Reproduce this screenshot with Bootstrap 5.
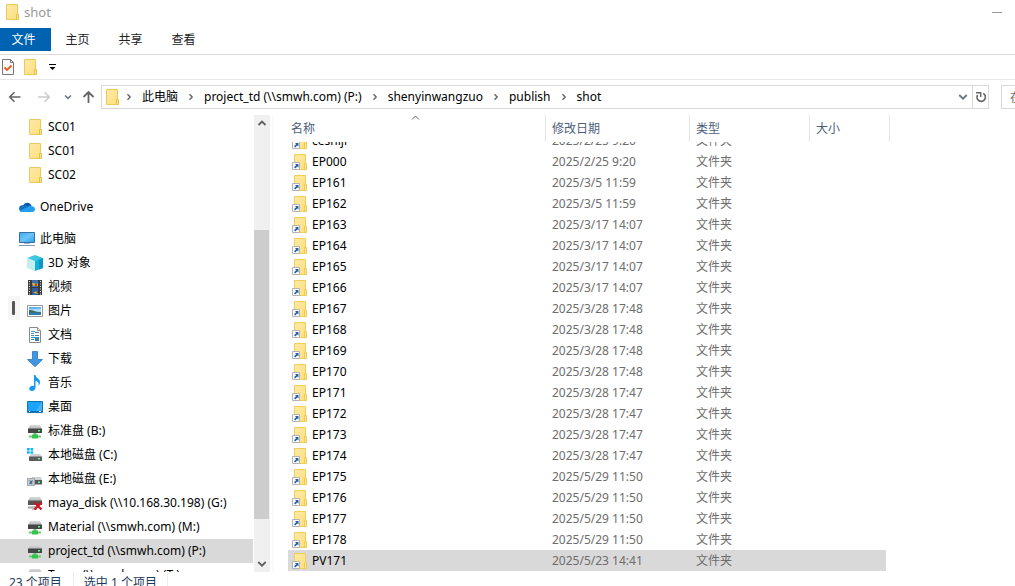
<!DOCTYPE html>
<html lang="zh-CN">
<head>
<meta charset="utf-8">
<meta name="viewport" content="width=device-width, initial-scale=1">
<title>shot</title>
<link href="https://cdn.jsdelivr.net/npm/bootstrap@5.3.0/dist/css/bootstrap.min.css" rel="stylesheet">
<style>
  body { font: 12px/20px "Noto Sans", "Noto Sans CJK SC", sans-serif; color: #000; background: #fff; }
  button, input { font: inherit; color: inherit; }
  svg { display: block; flex: none; }
  .ico { width: 16px; height: 16px; }
  .plain { border: 0; background: none; padding: 0; }

  .title-bar { height: 28px; padding: 0 13px 4px 4px; font-size: 13px; color: #999; }
  .ribbon { height: 27px; border-bottom: 1px solid #dadbdc; }
  .ribbon .nav-link { height: 23px; padding: 0; line-height: 24px; width: 53px; text-align: center; color: #222; }
  .ribbon .nav-link.active { width: 51px; padding-right: 4px; background: #0063b1; color: #fff; }
  .quick { height: 25px; gap: 6px; border-bottom: 1px solid #e6e6e6; }

  .address-row { height: 35px; padding: 5px 0 6px; }
  .up { margin: 0 6px; }
  .address { border: 1px solid #d9d9d9; min-width: 0; padding-left: 2px; }
  .address .breadcrumb-item { padding: 0; }
  .address .breadcrumb-item + .breadcrumb-item::before { display: none; }
  .address .breadcrumb-item svg { margin: 0 9px; }
  .address .breadcrumb-item:first-child svg { margin-left: 5px; }
  .address a { color: #000; text-decoration: none; white-space: nowrap; line-height: 22px; }
  .address .refresh { width: 16px; border-left: 1px solid #d9d9d9; }
  .search { width: 14px; overflow: hidden; margin-left: 12px; }
  .search input { width: 240px; height: 24px; border: 1px solid #d9d9d9; padding: 0 8px; border-radius: 0; outline: 0; }
  .search input::placeholder { color: #6d6d6d; opacity: 1; }

  .tree { width: 254px; overflow: hidden; }
  .tree ul { margin: 0; padding: 0; list-style: none; }
  .tree .group { margin-bottom: 8px; }
  .tree a { display: flex; align-items: center; gap: 5px; height: 24px; padding-left: 19px; margin-right: 1px; color: #000; text-decoration: none; white-space: nowrap; }
  .tree a .lbl { line-height: 24px; }
  .tree ul ul a { padding-left: 27px; }
  .tree a.current { background: #d9d9d9; }
  .handle { left: 8px; top: 181px; width: 12px; height: 24px; background: #f6f6f6; }
  .handle::after { content: ""; position: absolute; left: 4px; top: 5px; width: 3px; height: 14px; background: #555; border-radius: 1px; }

  .scroller { width: 16px; background: #f0f0f0; }
  .scroller .track { flex: 99 0 0; }
  .scroller .thumb { flex: 289 0 0; margin-right: 1px; background: #cdcdcd; }
  .scroller .rest { flex: 37 0 0; }
  .scroller button { height: 16px; }
  .divide { width: 3px; border-right: 1px solid #f7f7f7; }

  .files { overflow: hidden; padding-left: 15px; }
  .files table { table-layout: fixed; width: 602px; border-collapse: separate; border-spacing: 0; }
  .files th { position: sticky; top: 0; height: 27px; padding: 0 0 0 6px; background: #fff; border-right: 1px solid #e5e5e5; color: #4c607a; font-weight: 400; line-height: 27px; }
  .files th:first-child { padding-left: 3px; }
  .files th svg { position: absolute; left: 123px; top: 0; }
  .files td { height: 21px; padding: 0 0 0 6px; color: #6d6d6d; line-height: 21px; white-space: nowrap; }
  .files td:first-child { padding-left: 4px; color: #000; }
  .files td:last-child { border-right: 4px solid transparent; background-clip: padding-box; }
  .files tr.picked td { background-color: #d9d9d9; }
  .files .end { height: 1px; }

  .status { height: 14px; overflow: hidden; line-height: 22px; color: #1e395b; padding-left: 9px; }
  .status span + span { margin-left: 11px; padding-left: 10px; border-left: 1px solid #eee; }
  .status span:last-child { padding-right: 10px; border-right: 1px solid #eee; }
</style>
</head>
<body>
<svg width="0" height="0" class="position-absolute" aria-hidden="true">
  <defs>
    <linearGradient id="gFold" x1="0" y1="0" x2="1" y2="1"><stop offset="0" stop-color="#ffeaa6"/><stop offset="1" stop-color="#fddf80"/></linearGradient>
    <linearGradient id="gScreen" x1="0" y1="0" x2="1" y2="1"><stop offset="0" stop-color="#3fa9f5"/><stop offset=".5" stop-color="#6cc4fb"/><stop offset="1" stop-color="#2b9cf0"/></linearGradient>
    <linearGradient id="gDrive" x1="0" y1="0" x2="0" y2="1"><stop offset="0" stop-color="#d9d9dc"/><stop offset="1" stop-color="#b8b9bc"/></linearGradient>
  </defs>
  <symbol id="folder" viewBox="0 0 16 16"><path d="M2.500.5h11v15h-11z" fill="url(#gFold)" stroke="#ebcb5f"/><path d="M12.500 10.500h2v5h-2z" fill="#ffe794" stroke="#e6bf45"/></symbol>
  <symbol id="link-folder" viewBox="0 0 16 16"><path d="M2.500.5h11v15h-11z" fill="url(#gFold)" stroke="#f0cf55"/><path d="M12.500 9.500h2v6h-2z" fill="#ffe794" stroke="#efcb50"/><path d="M.5 8.500h7v7h-7z" fill="#fff" stroke="#b0b4b8"/><path d="M3 10h3.500v3.500L5.300 12.400 3.200 14.500 2 13.300 4.100 11.200z" fill="#2a62a8"/></symbol>
  <symbol id="cloud" viewBox="0 0 16 16"><path d="M4 6.500A4.500 4.500 0 0 1 12.500 7L8 10.500z" fill="#0a5ba8"/><path d="M3.500 6.200C5.500 5.500 7 6.300 9 7.600L4 13H3.500A3.400 3.400 0 0 1 3.500 6.200z" fill="#1272c8"/><path d="M9 7.700c1.500-1.300 3.300-1 4-.5 2.200.3 3 1.600 3 3 0 1.800-1.200 2.800-2.700 2.800H3.500C2.500 13 1.500 12.600 1 11.800z" fill="#239ff0"/></symbol>
  <symbol id="pc" viewBox="0 0 16 16"><path d="M.5 1.500h15v10H.5z" fill="url(#gScreen)" stroke="#36719f"/><path d="M5 12.500h6" stroke="#a4b8c8"/><path d="M0 14.500h16" stroke="#7f9bb3"/></symbol>
  <symbol id="cube" viewBox="0 0 16 16"><path d="M0 3 8 0l8 3-8 3.500z" fill="#3cc8dd"/><path d="M0 3l8 3v10l-8-3z" fill="#c3eef0"/><path d="M8 6l8-3v10l-8 3z" fill="#14b2d8"/><path d="M12 4.500 16 3v10l-4 1.500z" fill="#0a97c7"/></symbol>
  <symbol id="film" viewBox="0 0 16 16"><path d="M1 1h14v15H1z" fill="#3b3b3b"/><path d="M5 1h6v7H5z" fill="#3f6fae"/><path d="M5 9h6v7H5z" fill="#2d5ea0"/><path d="M5 4h2l2 1 2-1v3H6zM6 14l3-2 2 3z" fill="#d0a53b"/><path d="M8 5h2v2H8z" fill="#c7402e"/><path d="M2.500 2V16M13.500 2V16" stroke="#eee" stroke-dasharray="1 1.500"/></symbol>
  <symbol id="photo" viewBox="0 0 16 16"><path d="M.5 2.500h15v11H.5z" fill="#fff" stroke="#999"/><path d="M2 4h12v8H2z" fill="#a9dcf7"/><path d="M2 4h12v2c-4-1-8 1-12 0z" fill="#62b4ec"/><path d="M2 7c4 0 7 2.500 12 2V10H2z" fill="#3c6650"/><path d="M2 9.500h12V12H2z" fill="#2d7cad"/></symbol>
  <symbol id="doc" viewBox="0 0 16 16"><path d="M2.500.5h8l3 3v12h-11z" fill="#fff" stroke="#8a8a8a"/><path d="M10.500.5v3h3" fill="#eee" stroke="#8a8a8a"/><path d="M4 6.500h3M4 8.500h3M4 4.500h4M4 10.500h8M4 12.500h3" stroke="#3394cf"/><path d="M8 5.500h4M8 8.500h4" stroke="#4e7f9f"/><path d="M8 11h4v3H8z" fill="#3d84aa"/></symbol>
  <symbol id="down" viewBox="0 0 16 16"><path d="M5.500.5h5v8h5L8 15.700.5 8.500h5z" fill="#3f97e3" stroke="#2c78bd" stroke-width=".8"/></symbol>
  <symbol id="note" viewBox="0 0 16 16"><path d="M7 0h1.500c.3 3 4.700 3.500 4.500 7.500-.1 1.600-1 2.700-1.500 3 .6-2.500-.3-4-3-4.700V12c0 2.500-1.500 3.900-3.500 4C3 16 2 15 2.200 13.500c.3-2 2.800-3.300 4.800-2.500z" fill="#119af0"/></symbol>
  <symbol id="desk" viewBox="0 0 16 16"><path d="M.5 2.500h15v11H.5z" fill="#1ea3fb" stroke="#1173b8"/><path d="M15 3v8L8 13z" fill="#42b4fc"/><path d="M1 12.500h14" stroke="#0e6db5"/><path d="M2 12.500h1M12 12.500h2" stroke="#fff"/></symbol>
  <symbol id="netdrive" viewBox="0 0 16 16"><path d="M3 2h10l2 4H1z" fill="url(#gDrive)"/><path d="M1 5.500h14V10H1z" fill="#454647"/><path d="M11 7.700h2" stroke="#48ff70" stroke-width="1.500"/><path d="M6.500 10h3v2h-3z" fill="#6dc07a"/><path d="M2 13.500h12" stroke="#6cc97a" stroke-width="2"/><path d="M5 11.500h6v4H5z" fill="#35c44b"/></symbol>
  <symbol id="windrive" viewBox="0 0 16 16"><path d="M0 1h2.700v2.500H0zM3.500 1h2.700v2.500H3.500zM0 4.200h2.700v2.500H0zM3.500 4.200h2.700v2.500H3.500z" fill="#13b2f2"/><path d="M4 7h9l2 3H2z" fill="#cfd0d2"/><path d="M2 9.500h13V14H2z" fill="#5a5c5e"/><path d="M11 11.700h2" stroke="#5cff76" stroke-width="1.500"/></symbol>
  <symbol id="userdrive" viewBox="0 0 16 16"><path d="M5 6h9l1 3H5z" fill="#cfd0d2"/><path d="M7 9h8v4.500H7z" fill="#55585a"/><path d="M11 11.200h2" stroke="#5cff76" stroke-width="1.500"/><path d="M.5 7.500h7v7h-7z" fill="#c7cdd2" stroke="#9fa5aa"/><path d="M2 9l2 1 2-1-1 3 1 1H2l1-2z" fill="#4b7096"/></symbol>
  <symbol id="baddrive" viewBox="0 0 16 16"><path d="M3 2h10l2 4H1z" fill="url(#gDrive)"/><path d="M1 5.500h14V10H1z" fill="#555"/><path d="M1 12.500h8" stroke="#a6a6a6" stroke-width="2"/><path d="M5 11h5v4H5z" fill="#bbb"/><path d="M7.500 7.500l7 7M14.500 7.500l-7 7" stroke="#d8101f" stroke-width="2.200"/></symbol>
  <symbol id="chev-r" viewBox="0 0 8 8"><path d="M2.500 1.200 5.200 4 2.500 6.800" fill="none" stroke="#666" stroke-width="1.400"/></symbol>
  <symbol id="chev-d" viewBox="0 0 10 10"><path d="M1.300 3 5 6.700 8.700 3" fill="none" stroke="currentColor" stroke-width="1.800"/></symbol>
</svg>

<div class="d-flex flex-column vh-100 overflow-hidden">
  <header class="title-bar d-flex align-items-center flex-shrink-0">
    <svg class="ico"><use href="#folder"/></svg>
    <span class="ms-1">shot</span>
    <button class="plain ms-auto" aria-label="最小化"><svg width="10" height="10"><path d="M0 5.500h10" stroke="#999"/></svg></button>
  </header>

  <nav class="ribbon nav flex-nowrap flex-shrink-0" aria-label="功能区">
    <a class="nav-link active" href="#">文件</a>
    <a class="nav-link" href="#">主页</a>
    <a class="nav-link" href="#">共享</a>
    <a class="nav-link" href="#">查看</a>
  </nav>

  <div class="quick d-flex align-items-center flex-shrink-0">
    <button class="plain" aria-label="属性"><svg class="ico" viewBox="0 0 16 16"><path d="M2.500.5h8l3 3v12h-11z" fill="#f8f8f8" stroke="#777"/><path d="M10.500.5v3h3" fill="none" stroke="#777"/><path d="M4.500 8.500l2.500 2.500 4.500-4.500" fill="none" stroke="#e8591c" stroke-width="1.800"/></svg></button>
    <button class="plain" aria-label="新建文件夹"><svg class="ico"><use href="#folder"/></svg></button>
    <button class="plain ms-1" aria-label="自定义快速访问工具栏"><svg width="9" height="8"><path d="M1 1.500h7" stroke="#000"/><path d="M1.500 4h6L4.500 7z"/></svg></button>
  </div>

  <div class="address-row d-flex flex-shrink-0">
    <div class="d-flex align-items-center ps-2">
      <button class="plain" aria-label="后退"><svg width="14" height="14"><path d="M12.500 7H2M6.500 2.200 1.700 7l4.800 4.800" fill="none" stroke="#666" stroke-width="1.600"/></svg></button>
      <button class="plain ms-3" aria-label="前进" disabled><svg width="14" height="14"><path d="M0 7h11.500M6.500 2.200 11.300 7l-4.800 4.800" fill="none" stroke="#ccc" stroke-width="1.600"/></svg></button>
      <button class="plain ms-2 px-1 text-secondary" aria-label="最近的位置"><svg width="8" height="8"><use href="#chev-d"/></svg></button>
      <button class="plain up" aria-label="上一级"><svg width="13" height="14"><path d="M6.500 13V2.500M1.500 7l5-5 5 5" fill="none" stroke="#666" stroke-width="1.800"/></svg></button>
    </div>
    <div class="address d-flex align-items-center flex-grow-1">
      <svg class="ico"><use href="#folder"/></svg>
      <ol class="breadcrumb flex-nowrap align-items-center m-0 flex-grow-1" id="crumbs"></ol>
      <button class="plain px-1 text-secondary" aria-label="以前的位置"><svg width="10" height="10"><use href="#chev-d"/></svg></button>
      <button class="plain refresh h-100 d-flex align-items-center justify-content-center" aria-label="刷新"><svg width="12" height="12"><path d="M8.200 2.500A4.200 4.200 0 1 1 2.600 4" fill="none" stroke="#666" stroke-width="1.600"/><path d="M1 1.800h4.700V6" fill="none" stroke="#666" stroke-width="1.500"/></svg></button>
    </div>
    <div class="search"><input type="search" aria-label="搜索" placeholder="在 shot 中搜索"></div>
  </div>

  <main class="d-flex flex-grow-1 position-relative" style="min-height:0">
    <nav class="tree flex-shrink-0" aria-label="导航窗格"><ul id="tree"></ul></nav>
    <div class="handle position-absolute"></div>
    <div class="scroller d-flex flex-column flex-shrink-0">
      <button class="plain d-flex align-items-center justify-content-center" aria-label="向上"><svg width="10" height="10"><path d="M1.500 7 5 3.500 8.500 7" fill="none" stroke="#606060" stroke-width="1.800"/></svg></button>
      <div class="track"></div><div class="thumb"></div><div class="rest"></div>
      <button class="plain d-flex align-items-center justify-content-center" style="color:#606060" aria-label="向下"><svg width="10" height="10"><use href="#chev-d"/></svg></button>
    </div>
    <div class="divide flex-shrink-0"></div>
    <section class="files flex-grow-1" id="files">
      <table>
        <colgroup><col width="258"><col width="144"><col width="120"><col width="80"></colgroup>
        <thead><tr>
          <th scope="col">名称<svg width="9" height="6"><path d="M1 4.500 4.500 1 8 4.500" fill="none" stroke="#666"/></svg></th>
          <th scope="col">修改日期</th><th scope="col">类型</th><th scope="col">大小</th>
        </tr></thead>
        <tbody id="rows"></tbody>
      </table>
      <div class="end"></div>
    </section>
  </main>

  <footer class="status d-flex flex-shrink-0"><span>23 个项目</span><span>选中 1 个项目</span></footer>
</div>

<script src="https://cdn.jsdelivr.net/npm/bootstrap@5.3.0/dist/js/bootstrap.bundle.min.js"></script>
<script>
  const icon = id => `<svg class="ico" aria-hidden="true"><use href="#${id}"/></svg>`;

  document.getElementById('crumbs').innerHTML =
    ['此电脑', 'project_td (\\\\smwh.com) (P:)', 'shenyinwangzuo', 'publish', 'shot'].map(t =>
      `<li class="breadcrumb-item d-flex align-items-center"><svg width="8" height="8"><use href="#chev-r"/></svg><a href="#">${t}</a></li>`).join('');

  const item = ([id, text, current]) =>
    `<a href="#"${current ? ' class="current" aria-current="true"' : ''}>${icon(id)}<span class="lbl">${text}</span></a>`;
  const kids = list => '<ul>' + list.map(e => `<li>${item(e)}</li>`).join('') + '</ul>';
  document.getElementById('tree').innerHTML =
    `<li class="group">${kids([['folder', 'SC01'], ['folder', 'SC01'], ['folder', 'SC02']])}</li>` +
    `<li class="group">${item(['cloud', 'OneDrive'])}</li>` +
    `<li>${item(['pc', '此电脑'])}${kids([
      ['cube', '3D 对象'], ['film', '视频'], ['photo', '图片'], ['doc', '文档'],
      ['down', '下载'], ['note', '音乐'], ['desk', '桌面'],
      ['netdrive', '标准盘 (B:)'], ['windrive', '本地磁盘 (C:)'], ['userdrive', '本地磁盘 (E:)'],
      ['baddrive', 'maya_disk (\\\\10.168.30.198) (G:)'], ['netdrive', 'Material (\\\\smwh.com) (M:)'],
      ['netdrive', 'project_td (\\\\smwh.com) (P:)', true], ['netdrive', 'Temp (\\\\smwh.com) (T:)']
    ])}</li>`;

  const files = [
    ['ceshiji', '2025/2/25 9:20'], ['EP000', '2025/2/25 9:20'],
    ['EP161', '2025/3/5 11:59'], ['EP162', '2025/3/5 11:59'],
    ['EP163', '2025/3/17 14:07'], ['EP164', '2025/3/17 14:07'],
    ['EP165', '2025/3/17 14:07'], ['EP166', '2025/3/17 14:07'],
    ['EP167', '2025/3/28 17:48'], ['EP168', '2025/3/28 17:48'],
    ['EP169', '2025/3/28 17:48'], ['EP170', '2025/3/28 17:48'],
    ['EP171', '2025/3/28 17:47'], ['EP172', '2025/3/28 17:47'],
    ['EP173', '2025/3/28 17:47'], ['EP174', '2025/3/28 17:47'],
    ['EP175', '2025/5/29 11:50'], ['EP176', '2025/5/29 11:50'],
    ['EP177', '2025/5/29 11:50'], ['EP178', '2025/5/29 11:50'],
    ['PV171', '2025/5/23 14:41']
  ];
  document.getElementById('rows').innerHTML = files.map(([name, date]) =>
    `<tr${name === 'PV171' ? ' class="picked"' : ''}><td><div class="d-flex align-items-center gap-1">${icon('link-folder')}${name}</div></td><td>${date}</td><td>文件夹</td><td></td></tr>`).join('');

  // The list opens scrolled to its last entry.
  const pane = document.getElementById('files');
  pane.scrollTop = pane.scrollHeight;
</script>
</body>
</html>
